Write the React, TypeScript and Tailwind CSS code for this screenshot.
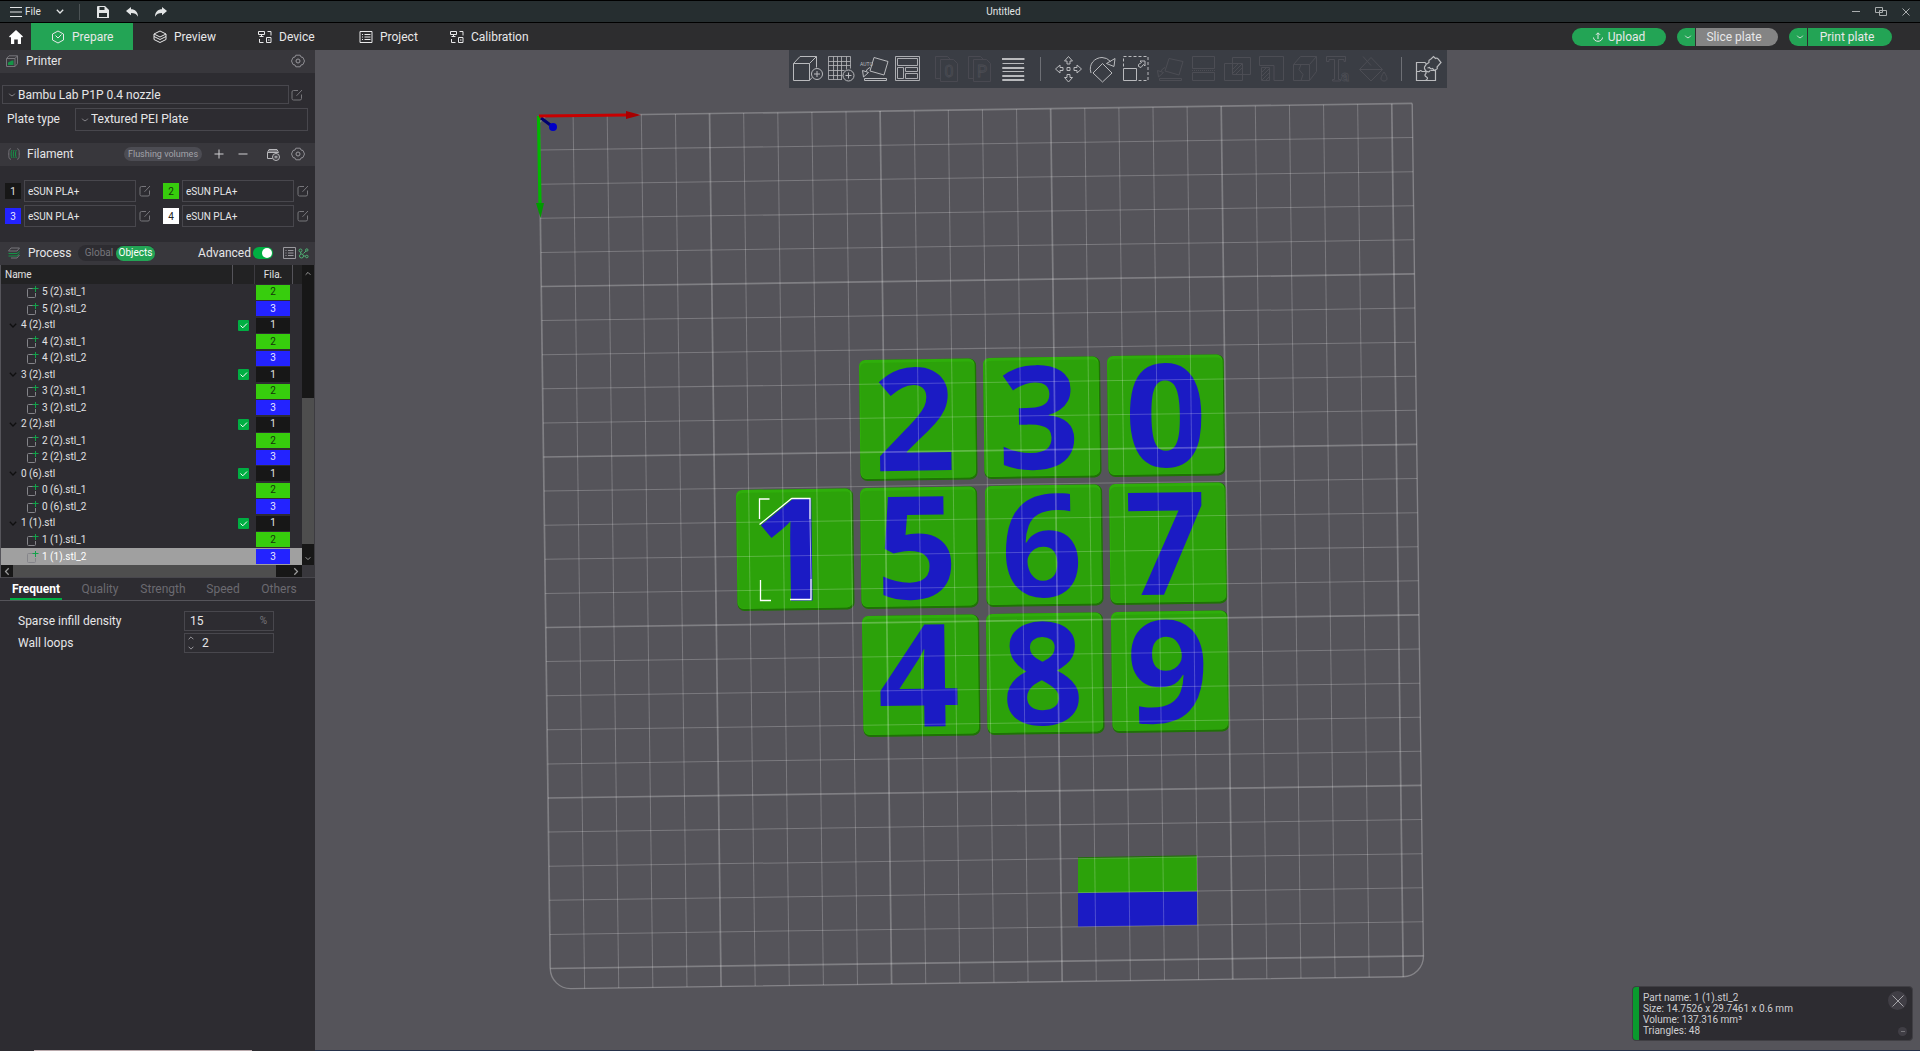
import React from "react";

/* ---------- small icons ---------- */

function Chevron({ className = "" }: { className?: string }) {
  return (
    <svg viewBox="0 0 8 5" className={className} fill="none" stroke="currentColor">
      <path d="M0.5 0.8 Q4 6.2 7.5 0.8" />
    </svg>
  );
}

function AngleIcon({ className = "" }: { className?: string }) {
  return (
    <svg viewBox="0 0 8 5" className={className} fill="none" stroke="currentColor" strokeWidth="1.3">
      <path d="M0.8 0.8 L4 4 L7.2 0.8" />
    </svg>
  );
}

function EditIcon() {
  return (
    <svg viewBox="0 0 12 12" className="size-3" fill="none" stroke="#77767b">
      <path d="M7 1.5H2.5a1.5 1.5 0 0 0-1.5 1.5v6.5a1.5 1.5 0 0 0 1.5 1.5H9a1.5 1.5 0 0 0 1.5-1.5V5.5M5.5 6.8 11 1" />
    </svg>
  );
}

function GearIcon() {
  return (
    <svg viewBox="0 0 14 14" className="size-3.5" fill="none" stroke="#9a999e">
      <path d="M4.800 1.200h4.400l0.800 1.800 2 0.500 1.500 3.500-1.500 3.500-2 0.500-0.800 1.800H4.800L4 11l-2-0.500L0.500 7 2 3.500 4 3z" strokeWidth="0.900" />
      <circle cx="7" cy="7" r="2" />
    </svg>
  );
}

function DeviceIcon() {
  return (
    <svg viewBox="0 0 14 14" className="size-3.5" fill="none" stroke="currentColor">
      <path d="M0.500 1.500h6v3h-6zM3.500 4.500v2M1.500 6.500h4M9.500 1.500h3.500v4M1.500 9v3.500h4M8.500 7.500h4.500v5H8.500zM10 10h1.500" />
    </svg>
  );
}

/* ---------- title bar ---------- */

function TitleBar() {
  return (
    <header className="relative flex h-[23px] shrink-0 items-center border-y border-black bg-[#262e30] text-[#e3e5e6]">
      <button className="ml-2.5 flex items-center gap-[3px] text-[10px]">
        <svg viewBox="0 0 12 10" className="h-2.5 w-3" fill="none" stroke="currentColor">
          <path d="M0 0.500h12M0 5h12M0 9.500h12" />
        </svg>
        File
      </button>
      <button aria-label="File menu" className="ml-[15px]">
        <AngleIcon className="h-[5px] w-2" />
      </button>
      <span className="ml-[15px] h-4 w-px bg-[#4b5254]" />
      <button aria-label="Save" className="ml-[17px]">
        <svg viewBox="0 0 12 12" className="size-3" fill="currentColor">
          <path fillRule="evenodd" d="M1 0h7l4 4v8H0V1a1 1 0 0 1 1-1zM2.500 1v3h5V1zM2 7v4h8V7z" />
        </svg>
      </button>
      <button aria-label="Undo" className="ml-[17px]">
        <svg viewBox="0 0 12 10" className="h-2.5 w-3" fill="currentColor">
          <path d="M0 4 5 0v2.300c4 0 7 2.500 7 7.500C10.500 7 8.500 6 5 6v2.300z" />
        </svg>
      </button>
      <button aria-label="Redo" className="ml-[17px]">
        <svg viewBox="0 0 12 10" className="h-2.5 w-3" fill="currentColor">
          <path d="M12 4 7 0v2.300C3 2.300 0 4.800 0 9.800 1.500 7 3.500 6 7 6v2.300z" />
        </svg>
      </button>
      <h1 className="flex-1 pr-3 text-center text-[10px]">Untitled</h1>
      <div className="flex items-center gap-[15px] pr-2.5 text-[#a9adae]">
        <button aria-label="Minimise">
          <svg viewBox="0 0 8 8" className="size-2" stroke="currentColor">
            <path d="M0 3.500h8" />
          </svg>
        </button>
        <button aria-label="Restore">
          <svg viewBox="0 0 12 9" className="h-[9px] w-3" fill="none" stroke="currentColor">
            <path d="M0.500 0.500h7v5h-7zM4.500 3.500h7v5h-7z" />
          </svg>
        </button>
        <button aria-label="Close">
          <svg viewBox="0 0 8 8" className="size-2" stroke="currentColor">
            <path d="M0.500 0.500l7 7M7.500 0.500l-7 7" />
          </svg>
        </button>
      </div>
    </header>
  );
}

/* ---------- main tabs ---------- */

function NavBar() {
  return (
    <nav className="flex h-[27px] shrink-0 items-center bg-[#2d2d2f] text-xs text-[#e8e8e9]">
      <button aria-label="Home" className="flex w-[31px] justify-center">
        <svg viewBox="0 0 14 14" className="size-3.5" fill="#fff">
          <path d="M7 0 14 6.500l-1 1-1-0.500v7H8.800V9.500H5.200V14H2V7l-1 0.500-1-1z" />
        </svg>
      </button>
      <button className="flex h-full w-[102px] items-center gap-[7px] bg-[#23a455] pl-5">
        <svg viewBox="0 0 14 14" className="size-3.5" fill="none" stroke="currentColor">
          <path d="M7 1 12.500 4v6L7 13 1.500 10V4zM4.500 5.500 7 8l3.500-3.500" />
        </svg>
        Prepare
      </button>
      <button className="ml-5 flex w-[105px] items-center gap-[7px]">
        <svg viewBox="0 0 14 14" className="size-3.5" fill="none" stroke="currentColor">
          <path d="M7 1 13 4 7 7 1 4zM1 6.500l6 3 6-3M1 9.500l6 3 6-3M1 4v5.500M13 4v5.500" />
        </svg>
        Preview
      </button>
      <button className="flex w-[101px] items-center gap-[7px]">
        <DeviceIcon />
        Device
      </button>
      <button className="flex w-[91px] items-center gap-[7px]">
        <svg viewBox="0 0 14 14" className="size-3.5" fill="none" stroke="currentColor">
          <path d="M1 1.500h12v11H1zM3 4.500h1M5.500 4.500h6M3 7h1M5.500 7h6M3 9.500h1M5.500 9.500h6" />
        </svg>
        Project
      </button>
      <button className="flex items-center gap-[7px]">
        <DeviceIcon />
        Calibration
      </button>

      <div className="ml-auto flex items-center pr-7">
        <button className="flex h-[18px] w-[94px] items-center justify-center gap-[5px] rounded-full bg-[#23a455]">
          <svg viewBox="0 0 10 10" className="size-2.5" fill="none" stroke="currentColor">
            <path d="M0.500 5.500a4.500 3.800 0 0 0 9 0M5 7V1M3 2.800 5 0.800l2 2" />
          </svg>
          Upload
        </button>
        <button aria-label="Slice options" className="ml-[11px] flex h-[18px] w-[18px] items-center justify-center rounded-l-full bg-[#23a455]">
          <Chevron className="ml-1 h-1 w-2" />
        </button>
        <button className="ml-px h-[18px] w-[82px] rounded-r-full bg-[#848484] pr-1.5">Slice plate</button>
        <button aria-label="Print options" className="ml-[11px] flex h-[18px] w-[18px] items-center justify-center rounded-l-full bg-[#23a455]">
          <Chevron className="ml-1 h-1 w-2" />
        </button>
        <button className="ml-px h-[18px] w-[84px] rounded-r-full bg-[#23a455] pr-1.5">Print plate</button>
      </div>
    </nav>
  );
}

/* ---------- sidebar ---------- */

const swatches: Record<number, string> = {
  1: "bg-[#171717] text-[#e6e6e6]",
  2: "bg-[#37cd0d] text-[#15340c]",
  3: "bg-[#2323ff] text-[#e6e6ff]",
  4: "bg-white text-[#222]",
};

function Filament({ n }: { n: number }) {
  return (
    <div className="flex items-center">
      <span className={"flex size-4 items-center justify-center text-[10px] " + swatches[n]}>{n}</span>
      <input
        aria-label={"Filament " + n}
        defaultValue="eSUN PLA+"
        className="ml-[3px] h-[22px] w-28 border border-[#48474d] bg-transparent px-[3px] text-[10px] text-[#e6e6e8] outline-none"
      />
      <button aria-label={"Edit filament " + n} className="ml-[3px]">
        <EditIcon />
      </button>
    </div>
  );
}

const rows: { name: string; fila: number; child: boolean }[] = [
  { name: "5 (2).stl_1", fila: 2, child: true },
  { name: "5 (2).stl_2", fila: 3, child: true },
  { name: "4 (2).stl", fila: 1, child: false },
  { name: "4 (2).stl_1", fila: 2, child: true },
  { name: "4 (2).stl_2", fila: 3, child: true },
  { name: "3 (2).stl", fila: 1, child: false },
  { name: "3 (2).stl_1", fila: 2, child: true },
  { name: "3 (2).stl_2", fila: 3, child: true },
  { name: "2 (2).stl", fila: 1, child: false },
  { name: "2 (2).stl_1", fila: 2, child: true },
  { name: "2 (2).stl_2", fila: 3, child: true },
  { name: "0 (6).stl", fila: 1, child: false },
  { name: "0 (6).stl_1", fila: 2, child: true },
  { name: "0 (6).stl_2", fila: 3, child: true },
  { name: "1 (1).stl", fila: 1, child: false },
  { name: "1 (1).stl_1", fila: 2, child: true },
  { name: "1 (1).stl_2", fila: 3, child: true },
];

function ObjectList() {
  return (
    <div className="border-l border-[#55545a] bg-[#2d2c31]">
      <div className="flex h-[300px]">
        <table className="h-full min-w-0 flex-1 table-fixed border-collapse text-[10px] leading-3 text-[#e2e2e4]">
          <colgroup>
            <col />
            <col className="w-[22px]" />
            <col className="w-[38px]" />
            <col className="w-2.5" />
          </colgroup>
          <thead>
            <tr className="h-[19px] bg-[#222223]">
              <th className="border-r border-[#55545a] p-0 pl-1 text-left font-normal">Name</th>
              <th className="border-r border-[#3c3b40] p-0" />
              <th className="border-r border-[#55545a] p-0 text-center font-normal">Fila.</th>
              <th className="p-0" />
            </tr>
          </thead>
          <tbody>
            {rows.map((r, i) => (
              <tr key={r.name} className={i === rows.length - 1 ? "bg-[#a0a0a0] text-white" : ""}>
                <td className="p-0">
                  {r.child ? (
                    <div className="flex items-center gap-[3px] pl-[26px]">
                      <svg viewBox="0 0 12 12" className="size-3" fill="none">
                        <path d="M6 2.500H1.500a1 1 0 0 0-1 1v7a1 1 0 0 0 1 1h6a1 1 0 0 0 1-1V7" stroke="#85858a" />
                        <path d="M8.500 0v6M5.500 2.500h6" stroke="#12a24a" />
                      </svg>
                      {r.name}
                    </div>
                  ) : (
                    <div className="flex items-center gap-1 pl-2">
                      <AngleIcon className="h-[5px] w-2 text-[#0f0f10]" />
                      {r.name}
                    </div>
                  )}
                </td>
                <td className="p-0">
                  {!r.child && (
                    <div className="relative ml-1.5 size-[11px]">
                      <input
                        type="checkbox"
                        defaultChecked
                        aria-label={"Printable " + r.name}
                        className="block size-[11px] appearance-none rounded-[1px] bg-[#00ae42]"
                      />
                      <svg viewBox="0 0 11 11" className="pointer-events-none absolute inset-0" fill="none" stroke="#fff">
                        <path d="M2.500 5.500 4.800 7.800 9 3.500" />
                      </svg>
                    </div>
                  )}
                </td>
                <td className="p-0">
                  <div className={"ml-0.5 flex h-[15px] w-[34px] items-center justify-center " + swatches[r.fila]}>{r.fila}</div>
                </td>
                <td className="p-0" />
              </tr>
            ))}
          </tbody>
        </table>
        <div className="flex w-3 flex-col items-center bg-[#171717] text-[#9a9a9a]">
          <AngleIcon className="mt-1.5 h-[5px] w-1.5 rotate-180" />
          <div className="mt-[122px] h-[146px] w-full bg-[#4e4e4e]" />
          <AngleIcon className="mt-3 h-[5px] w-1.5" />
        </div>
        <div className="w-px bg-[#3c3b40]" />
      </div>
      <div className="flex h-[13px] border-b border-[#48474d] text-[#9a9a9a]">
        <div className="flex min-w-0 flex-1 items-center bg-[#171717]">
          <AngleIcon className="ml-0.5 h-[5px] w-2 rotate-90" />
          <div className="ml-0.5 h-full flex-1 bg-[#4e4e4e]" />
          <AngleIcon className="mr-0.5 ml-4 h-[5px] w-2 -rotate-90" />
        </div>
        <div className="w-[13px] bg-[#38373c]" />
      </div>
    </div>
  );
}

function SectionHeader({ children }: { children: React.ReactNode }) {
  return <div className="flex h-[23px] items-center bg-[#38373c] pb-px text-xs text-[#e6e6e8]">{children}</div>;
}

function Sidebar() {
  return (
    <aside className="flex w-[315px] shrink-0 flex-col bg-[#2d2c31]">
      <SectionHeader>
        <svg viewBox="0 0 12 12" className="ml-1.5 size-3" fill="none">
          <path d="M0.500 3.500 3 0.800h8.500v8l-2.500 2.700H0.500zM0.500 3.500H9V11.500M9 3.500l2.500-2.700" stroke="#77767b" />
          <path d="M2 10V7.500L6 5.500h1.500V10z" fill="#159447" />
        </svg>
        <h2 className="ml-2">Printer</h2>
        <button aria-label="Printer settings" className="mr-2.5 ml-auto">
          <GearIcon />
        </button>
      </SectionHeader>

      <div className="mt-3 flex items-center pl-0.5">
        <div className="relative w-[287px]">
          <select
            aria-label="Printer preset"
            className="block h-[19px] w-full appearance-none border border-[#48474d] bg-[#2d2c31] pl-[15px] text-xs leading-4 text-[#e6e6e8]"
          >
            <option>Bambu Lab P1P 0.4 nozzle</option>
          </select>
          <Chevron className="pointer-events-none absolute top-2 left-1.5 h-1 w-2 text-[#9a999e]" />
        </div>
        <button aria-label="Edit printer preset" className="ml-0.5">
          <EditIcon />
        </button>
      </div>

      <div className="mt-1 flex items-center pl-[7px]">
        <label htmlFor="plate" className="w-[68px] pb-px text-xs text-[#e6e6e8]">
          Plate type
        </label>
        <div className="relative w-[233px]">
          <select
            id="plate"
            className="block h-[23px] w-full appearance-none border border-[#48474d] bg-[#2d2c31] pb-px pl-[15px] text-xs text-[#e6e6e8]"
          >
            <option>Textured PEI Plate</option>
          </select>
          <Chevron className="pointer-events-none absolute top-2.5 left-1.5 h-1 w-2 text-[#9a999e]" />
        </div>
      </div>

      <div className="mt-3">
        <SectionHeader>
          <svg viewBox="0 0 12 12" className="ml-2 size-3" fill="none">
            <path d="M3 0.800C1 0.800 0.800 2 0.800 6s0.200 5.200 2.200 5.200M9 0.800c2 0 2.200 1.200 2.200 5.200S11 11.200 9 11.200" stroke="#77767b" />
            <path d="M4 2c-1.200 1-1.200 7 0 8M6.200 2c-1.200 1-1.200 7 0 8M8.400 2c-1.200 1-1.200 7 0 8" stroke="#159447" />
          </svg>
          <h2 className="ml-[7px] w-[97px]">Filament</h2>
          <button className="h-3.5 w-[78px] rounded-full bg-[#4c4c53] text-[9px] leading-3 text-[#a3a3a9]">Flushing volumes</button>
          <button aria-label="Add filament" className="ml-3">
            <svg viewBox="0 0 10 10" className="size-2.5" stroke="#d0d0d2">
              <path d="M5 0.500v9M0.500 5h9" />
            </svg>
          </button>
          <button aria-label="Remove filament" className="ml-3.5">
            <svg viewBox="0 0 10 10" className="size-2.5" stroke="#d0d0d2">
              <path d="M0.500 5h9" />
            </svg>
          </button>
          <button aria-label="Sync filaments" className="ml-[18px]">
            <svg viewBox="0 0 14 13" className="h-[13px] w-3.5" fill="none" stroke="#b9b9bc">
              <path d="M6.500 10.500h-5V4.500L3 1.500h8l1.500 3M1.500 4.500h11M4 1.500v3M6 1.500v3M8 1.500v3M10 1.500v3" />
              <circle cx="10" cy="9" r="3.500" />
              <path d="M8.500 8.300h3M8.500 9.800h3" />
            </svg>
          </button>
          <button aria-label="Filament settings" className="mr-2.5 ml-auto">
            <GearIcon />
          </button>
        </SectionHeader>
      </div>

      <div className="grid grid-cols-[158px_auto] gap-y-[3px] pt-3.5 pb-3.5 pl-[5px]">
        <Filament n={1} />
        <Filament n={2} />
        <Filament n={3} />
        <Filament n={4} />
      </div>

      <div className="pt-px">
        <SectionHeader>
          <svg viewBox="0 0 12 12" className="ml-2 size-3" fill="none">
            <path d="M3 1h8.500L9 4H0.500zM3 11h6l2.500-3" stroke="#77767b" />
            <path d="M0.500 6.500H9l2.500-2M0.500 9H9l2.500-2.500" stroke="#159447" />
          </svg>
          <h2 className="ml-2 w-[50px]">Process</h2>
          <div className="flex h-4 items-center rounded-full bg-[#2d2c31] text-[10px]">
            <button className="w-[38px] pl-1 text-[#77767b]">Global</button>
            <button className="h-[15px] w-[39px] rounded-full bg-[#23a455] text-white">Objects</button>
          </div>
          <label htmlFor="advanced" className="ml-auto">
            Advanced
          </label>
          <div className="relative ml-0.5 h-3 w-5">
            <input id="advanced" type="checkbox" defaultChecked className="block h-3 w-5 appearance-none rounded-full bg-[#00ae42]" />
            <span className="pointer-events-none absolute top-px right-px size-2.5 rounded-full bg-white" />
          </div>
          <button aria-label="Parameter list" className="ml-2.5">
            <svg viewBox="0 0 13 12" className="h-3 w-[13px]" fill="none" stroke="#9a999e">
              <path d="M0.500 0.500h12v11H0.500zM2.500 3.500h1M5 3.500h5.500M2.500 6h1M5 6h5.500M2.500 8.500h1M5 8.500h5.500" />
            </svg>
          </button>
          <button aria-label="Compare presets" className="mr-1.5 ml-0.5">
            <svg viewBox="0 0 11 11" className="size-[11px]" fill="none" stroke="#4fae74">
              <circle cx="2.500" cy="2.500" r="1.500" />
              <circle cx="3.500" cy="8" r="2" />
              <circle cx="8.800" cy="2" r="1.200" />
              <circle cx="8.800" cy="8.500" r="1.300" />
              <path d="M2.500 4l0.500 2M5.500 5.500l2.500-2.500M5.500 8h2" />
            </svg>
          </button>
        </SectionHeader>
      </div>

      <ObjectList />

      <div className="flex h-[23px] border-b border-[#55545a] text-xs text-[#6b6a70]">
        <button className="ml-2.5 w-[52px] border-b-2 border-[#00ae42] pt-0.5 font-bold text-white">Frequent</button>
        <button className="ml-[18px] w-10">Quality</button>
        <button className="ml-[19px] w-12">Strength</button>
        <button className="ml-[18px] w-9">Speed</button>
        <button className="ml-[18px] w-10">Others</button>
      </div>

      <div className="grid grid-cols-[166px_90px] items-center gap-y-0.5 pt-2.5 pl-[18px] text-xs text-[#e6e6e8]">
        <label htmlFor="infill">Sparse infill density</label>
        <div className="flex h-5 items-center border border-[#48474d] pr-1.5 pl-[5px]">
          <input id="infill" defaultValue="15" className="w-full min-w-0 bg-transparent outline-none" />
          <span className="text-[10px] text-[#77767b]">%</span>
        </div>
        <label htmlFor="loops">Wall loops</label>
        <div className="flex h-5 items-center border border-[#48474d] pl-[3px]">
          <div className="flex w-3.5 shrink-0 flex-col gap-1.5 text-[#9a999e]">
            <button aria-label="More wall loops">
              <AngleIcon className="h-1 w-1.5 rotate-180" />
            </button>
            <button aria-label="Fewer wall loops">
              <AngleIcon className="h-1 w-1.5" />
            </button>
          </div>
          <input id="loops" defaultValue="2" className="w-full min-w-0 bg-transparent outline-none" />
        </div>
      </div>
      <div className="mt-auto ml-[34px] h-px w-[218px] bg-[#b9a9ac]" />
    </aside>
  );
}

/* ---------- 3D view ---------- */

// digit, tile left, tile top, digit centre inside the tile
const tiles: [string, number, number, number][] = [
  ["2", 859, 360, 55],
  ["3", 983, 358, 55],
  ["0", 1107, 356, 58],
  ["1", 736, 490, 57],
  ["5", 860, 488, 56],
  ["6", 985, 486, 56],
  ["7", 1109, 484, 56],
  ["4", 862, 616, 56],
  ["8", 986, 614, 56],
  ["9", 1111, 612, 56],
];

const steps = Array.from({ length: 26 }, (_, i) => i);

function PlateView() {
  return (
    <svg viewBox="315 50 1605 1001" preserveAspectRatio="xMidYMin slice" className="absolute inset-0 h-full w-full" role="img" aria-label="Build plate">
      {tiles.map(([d, x, y, cx]) => (
        <g key={d} transform={`matrix(1 -0.0143 0.0132 1 ${x} ${y})`}>
          <rect width="117" height="121" rx="7" fill="#1f7206" />
          <rect width="115.500" height="119" rx="6" fill="#2fae0b" />
          <rect x="1" y="3" width="114" height="115.500" rx="5" fill="#2ca20a" />
          <text
            x={cx}
            y="111.500"
            textAnchor="middle"
            fontSize="143"
            fontWeight="700"
            fill="#1b1bc4"
            className="font-['Open_Sans','Noto_Sans',sans-serif]"
          >
            {d}
          </text>
        </g>
      ))}
      <path d="M1078 858 1197 856V891.500L1078 893z" fill="#2ca20a" />
      <path d="M1078 858 1197 856" stroke="#1f7206" strokeWidth="1.500" />
      <path d="M1078 893 1197 891.500V925L1078 926.800z" fill="#1b1bc4" />

      <g transform="matrix(3.411 -0.049 0.045 3.41 539 116)" fill="none" stroke="#fff">
        {steps.map((i) => (
          <path key={"v" + i} d={`M${i * 10} 0V${i === 0 ? 250 : 256}`} strokeWidth={i % 5 ? 0.3 : 0.5} strokeOpacity={i % 5 ? 0.22 : 0.25} />
        ))}
        {steps.map((i) => (
          <path key={"h" + i} d={`M0 ${i * 10}H256`} strokeWidth={i % 5 ? 0.3 : 0.5} strokeOpacity={i % 5 ? 0.22 : 0.25} />
        ))}
        <path d="M0 2 2 0M256 0V250A6 6 0 0 1 250 256H6A6 6 0 0 1 0 250" strokeWidth="0.400" strokeOpacity="0.280" />
      </g>

      <g fill="none" stroke="#fff" strokeWidth="1.300">
        <path d="M759.500 519V499H769.500M760.500 580V600.500H771M791.500 498.500H810V519M811 579V599.500H790M791.500 498.500 759.500 524.500" />
        <path d="M810 519 811 579" strokeWidth="0.600" />
      </g>

      <path d="M541 118 553 127" stroke="#00006e" strokeWidth="3" />
      <circle cx="553" cy="127" r="4" fill="#0000c8" />
      <path d="M538.500 116 540 204" stroke="#00b800" strokeWidth="3.200" />
      <path d="M536 203h8l-3.500 15z" fill="#009a00" />
      <path d="M539 116 627 115" stroke="#c80000" strokeWidth="3.200" />
      <path d="M626 111v8l15-4z" fill="#a80000" />
    </svg>
  );
}

function Tool({ label, dim, children }: { label: string; dim?: boolean; children: React.ReactNode }) {
  return (
    <button aria-label={label} disabled={dim} className={dim ? "text-[#4c4d54]" : "text-[#b9babd]"}>
      <svg viewBox="0 0 34 38" className="h-[38px] w-[34px]" fill="none" stroke="currentColor">
        {children}
      </svg>
    </button>
  );
}

function ToolBar() {
  return (
    <div className="relative flex h-[38px] w-fit bg-[#3a3d44] px-0.5">
      <Tool label="Add">
        <path d="M2.500 13.500h16v17h-16zM2.500 13.500 9 6.500h16.500l-7 7M25.500 6.500v11M18.500 30.500l2.500-3" />
        <circle cx="26" cy="24" r="5.500" />
        <path d="M26 21v6M23 24h6" />
      </Tool>
      <Tool label="Add plate">
        <path d="M3.500 6.500h22v12M17 29.500H3.500v-23M8.500 6.500v23M12.500 6.500v23M16.500 6.500v23M21.500 6.500v13M3.500 11.500h22M3.500 15.500h22M3.500 20.500h16M3.500 25.500h14" strokeWidth="0.800" />
        <circle cx="23.500" cy="25.500" r="5.500" />
        <path d="M23.500 22.500v6M20.500 25.500h6" />
      </Tool>
      <Tool label="Auto orient">
        <path d="M15 7.500l14 4-4 13.500-14-4zM5.500 28.500h22v2h-22zM3.500 20.500l6 2-5 4.500zM7 21.500q1-3 4-4" />
        <text x="1" y="16" fontSize="5" stroke="none" fill="currentColor">AUTO</text>
      </Tool>
      <Tool label="Arrange">
        <path d="M2.500 6.500h24v24h-24zM4.500 8.500h20v7h-20zM4.500 17.500h6v11h-6zM12.500 17.500h12v4h-12zM12.500 23.500h12v5h-12z" strokeWidth="0.900" />
      </Tool>
      <Tool label="Split to objects" dim>
        <path d="M13.500 9.500h13l4 4v18h-17zM13 28.500H8.500v-22h12l3 3" strokeWidth="0.800" />
        <text x="22" y="27" fontSize="16" textAnchor="middle" strokeWidth="0.800">0</text>
      </Tool>
      <Tool label="Split to parts" dim>
        <path d="M12.500 9.500h13l4 4v18h-17zM12 28.500H7.500v-22h12l3 3" strokeWidth="0.800" />
        <text x="21" y="27" fontSize="16" textAnchor="middle" strokeWidth="0.800">P</text>
      </Tool>
      <Tool label="Variable layer height">
        <path d="M7 9h22.500" strokeWidth="2" />
        <path d="M7.500 13.500h21.500M7.500 17.500h21.500v1h-21.500zM7.500 21.500h21.500M7.500 25.500h21.500v1h-21.500zM7.500 29.500h21.500v1h-21.500z" />
      </Tool>
      <span className="mx-[11px] my-[7px] w-px bg-[#6d6f75]" />
      <Tool label="Move">
        <path d="M16.500 6.500l4 4.500h-2.500v3h-3v-3h-2.500zM16.500 32l4-4.500h-2.500v-3h-3v3h-2.500zM3.500 19l4.500-4v2.500h3v3h-3v2.500zM29.500 19l-4.500-4v2.500h-3v3h3v2.500zM15 17.500h3v3h-3z" />
      </Tool>
      <Tool label="Rotate">
        <path d="M16.500 13.500l9.500 9.500-9.500 9-9.500-9zM5 23C2 14 9 7.500 16 7.500q5 0 8.500 4M29 8.500l-1 8-7.500-3z" />
      </Tool>
      <Tool label="Scale">
        <path d="M3.500 18.500h13v12h-13z" />
        <path d="M3.500 16.500v-10h24.500v24h-9.500" strokeDasharray="3 2" />
        <path d="M18.500 16.500v-2l3-2-1.500-1.500h5v5l-1.500-1.500-2.500 3z" />
      </Tool>
      <Tool label="Lay on face" dim>
        <path d="M15 8.500l14 3-4 13.500-14-4zM5.500 28.500h22v2h-22zM3.500 20.500l6 2-5 4.500zM7 21.500q1-3 4-4" />
      </Tool>
      <Tool label="Cut" dim>
        <path d="M4.500 18.500v-12h22v12zM4.500 22.500h22v8h-22z" />
        <path d="M4 20.500h24" strokeDasharray="1 1" />
      </Tool>
      <Tool label="Boolean" dim>
        <path d="M2.500 13.500h18v17h-18zM10.500 7.500h18v17h-18zM11 19l5-5M11 23l9-9M14 24l6-6" />
      </Tool>
      <Tool label="Support painting" dim>
        <path d="M3.500 6.500h24v24h-9.500v-15H3.500zM5.500 17.500h8v13h-8zM6 22l4-4M6 26l7-7M6 30l7-7M10 30l3-3" />
      </Tool>
      <Tool label="Seam painting" dim>
        <path d="M3.500 14.500h16v16h-16zM3.500 14.500l7-8h16l-7 8M26.500 6.500v15l-7 9M11 14.500l-2 5 4 5-2 6" />
      </Tool>
      <Tool label="Text" dim>
        <path d="M2.500 6.500h19v5h-1.500v-2h-5.500v20h2v1.500h-8v-1.500h2v-20h-5.500v2h-2.500z" />
        <text x="17" y="30.500" fontSize="15" fontWeight="700" strokeWidth="0.800">a</text>
      </Tool>
      <Tool label="Color painting" dim>
        <path d="M1.500 19.500 13 7.500l11.500 12L13 31zM1.500 19.500h23M5 6.500l8 9M26 22c5 7 3 9 0 9s-5-2 0-9z" />
      </Tool>
      <span className="mx-[9px] my-[7px] w-px bg-[#6d6f75]" />
      <Tool label="Assembly view">
        <path
          strokeWidth="1.200"
          d="M14 12.500H5.500v18h19v-10h-5M5.500 21.500h3q1-2 2.500 0h3q2 1 0.500 2.500t1 3-1 3.500M15 21q3 2 4-0.500M14 12.500q2 1.500 0.500 3t-1 3 1.500 2.500M15 14.500l3-2q-0.500-3 1.500-3l3-3 2 2q2-1 3 1l2.500 3-4 4.500q1 2-1 2.500l-1.500 1-2-2q-2 1-3-1l-2 0.500"
        />
      </Tool>
    </div>
  );
}

function InfoPanel() {
  return (
    <div className="absolute right-[7px] bottom-[9px] flex h-[55px] w-[281px] overflow-hidden rounded-sm border border-[#403f44] bg-[#2d2c31] text-[10px] leading-[11px] text-[#cfcfd1]">
      <div className="w-1.5 bg-[#0a9a2e]" />
      <div className="pt-[5px] pl-1">
        <p>Part name: 1 (1).stl_2</p>
        <p>Size: 14.7526 x 29.7461 x 0.6 mm</p>
        <p>Volume: 137.316 mm³</p>
        <p>Triangles: 48</p>
      </div>
      <div className="ml-auto flex flex-col items-end justify-between py-1 pr-[5px]">
        <button aria-label="Close" className="flex size-[19px] items-center justify-center rounded-full bg-[#403e45]">
          <svg viewBox="0 0 12 12" className="size-3" stroke="#a6a5a9">
            <path d="M0.500 0.500l11 11M11.500 0.500l-11 11" />
          </svg>
        </button>
        <button aria-label="Collapse" className="flex size-[9px] items-center justify-center rounded-full bg-[#403e45]">
          <span className="h-px w-1 bg-[#77767b]" />
        </button>
      </div>
    </div>
  );
}

export default function App() {
  return (
    <div className="flex h-screen flex-col overflow-hidden bg-[#2d2c31] font-[Roboto,'Noto_Sans',sans-serif]">
      <TitleBar />
      <NavBar />
      <div className="flex min-h-0 flex-1">
        <Sidebar />
        <main className="relative flex min-w-0 flex-1 justify-center border-b border-[#26324a] bg-[#55545a]">
          <PlateView />
          <ToolBar />
          <InfoPanel />
        </main>
      </div>
    </div>
  );
}
